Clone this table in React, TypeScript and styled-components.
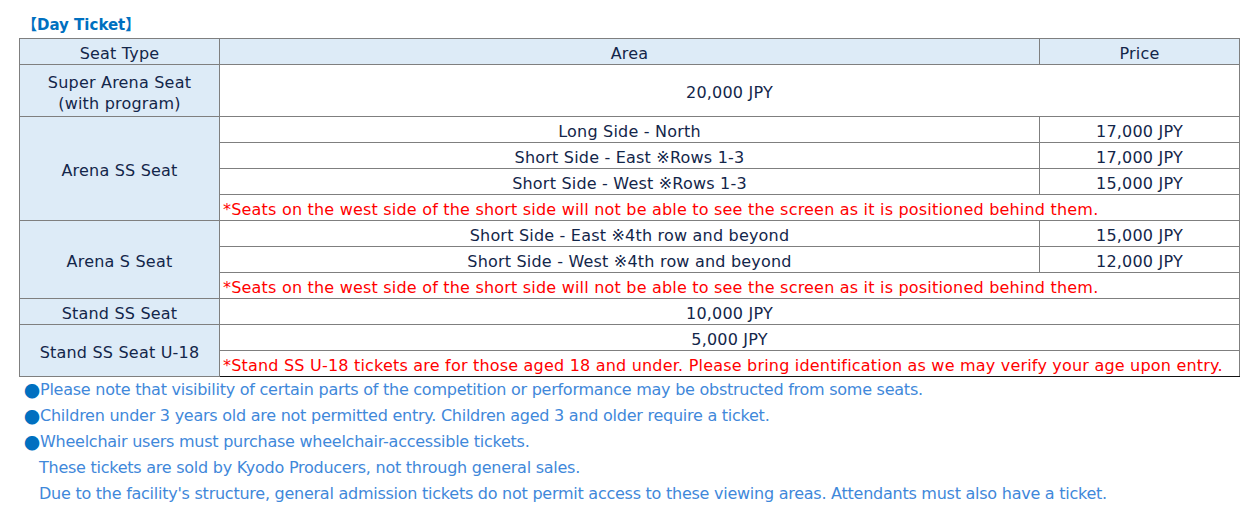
import { FC } from "react";
import styled, { createGlobalStyle } from "styled-components";

const GlobalStyle = createGlobalStyle`
    body {
        margin: 0;
        background: #FFFFFF;
        font-family: "DejaVu Sans", "Noto Sans CJK JP", sans-serif;
        font-size: 16px;
        color: #13264A;
    }
`

const Page = styled.div`
    padding: 12px 0 0 19px;
    width: 1220px;
`

const Title = styled.h2`
    margin: 0;
    padding-left: 3px;
    height: 26px;
    font-size: 15px;
    font-weight: bold;
    line-height: 26px;
    color: #0070C0;
`

const Table = styled.table`
    border-collapse: collapse;
    table-layout: fixed;
    width: 1220px;
    letter-spacing: 0.2px;
`

const Cell = styled.td<{ $head?: boolean; $note?: boolean }>`
    box-sizing: border-box;
    height: 26px;
    padding: 4px 2px 0;
    border: 1px solid #7F7F7F;
    line-height: 21px;
    text-align: ${p => (p.$note ? "left" : "center")};
    vertical-align: middle;
    white-space: nowrap;
    background: ${p => (p.$head ? "#DDEBF7" : "#FFFFFF")};
    color: ${p => (p.$note ? "#FF0000" : "#13264A")};
    padding-left: ${p => (p.$note ? "3px" : "2px")};
`

const SeatCell = styled(Cell)`
    background: #DDEBF7;
`

const LastRow = styled.tr`
    & > td:first-child {
        border-bottom-color: #111111;
    }
`

const Notes = styled.ul`
    list-style: none;
    margin: 0;
    padding: 0 0 0 5px;
    color: #3F88DA;
    letter-spacing: -0.25px;
`

const Note = styled.li<{ $indent?: boolean }>`
    height: 26px;
    line-height: 26px;
    white-space: nowrap;
    padding-left: ${p => (p.$indent ? "15px" : "0")};
`

const Bullet = styled.span`
    display: inline-block;
    height: 26px;
    vertical-align: top;
    color: #0070C0;
    font-family: "Noto Sans CJK JP", sans-serif;
    letter-spacing: 0;
`

interface PriceRow {
    area: string
    price: string
}

const arenaSS: PriceRow[] = [
    { area: "Long Side - North", price: "17,000 JPY" },
    { area: "Short Side - East ※Rows 1-3", price: "17,000 JPY" },
    { area: "Short Side - West ※Rows 1-3", price: "15,000 JPY" },
]

const arenaS: PriceRow[] = [
    { area: "Short Side - East ※4th row and beyond", price: "15,000 JPY" },
    { area: "Short Side - West ※4th row and beyond", price: "12,000 JPY" },
]

const westNote = "*Seats on the west side of the short side will not be able to see the screen as it is positioned behind them."

const SeatGroup: FC<{ name: string; rows: PriceRow[]; note: string }> = ({ name, rows, note }) => (
    <>
        {rows.map((r, i) => (
            <tr key={r.area}>
                {i === 0 && <SeatCell rowSpan={rows.length + 1}>{name}</SeatCell>}
                <Cell>{r.area}</Cell>
                <Cell>{r.price}</Cell>
            </tr>
        ))}
        <tr>
            <Cell $note colSpan={2}>{note}</Cell>
        </tr>
    </>
)

const App: FC = () => {
    return (
        <Page>
            <GlobalStyle />
            <Title>【Day Ticket】</Title>
            <Table>
                <colgroup>
                    <col style={{ width: 200 }} />
                    <col style={{ width: 820 }} />
                    <col style={{ width: 200 }} />
                </colgroup>
                <tbody>
                    <tr>
                        <Cell $head>Seat Type</Cell>
                        <Cell $head>Area</Cell>
                        <Cell $head>Price</Cell>
                    </tr>
                    <tr>
                        <SeatCell style={{ height: 52 }}>Super Arena Seat<br />(with program)</SeatCell>
                        <Cell colSpan={2}>20,000 JPY</Cell>
                    </tr>
                    <SeatGroup name="Arena SS Seat" rows={arenaSS} note={westNote} />
                    <SeatGroup name="Arena S Seat" rows={arenaS} note={westNote} />
                    <tr>
                        <SeatCell>Stand SS Seat</SeatCell>
                        <Cell colSpan={2}>10,000 JPY</Cell>
                    </tr>
                    <tr>
                        <SeatCell rowSpan={2}>Stand SS Seat U-18</SeatCell>
                        <Cell colSpan={2}>5,000 JPY</Cell>
                    </tr>
                    <LastRow>
                        <Cell $note colSpan={2}>*Stand SS U-18 tickets are for those aged 18 and under. Please bring identification as we may verify your age upon entry.</Cell>
                    </LastRow>
                </tbody>
            </Table>
            <Notes>
                <Note><Bullet>●</Bullet>Please note that visibility of certain parts of the competition or performance may be obstructed from some seats.</Note>
                <Note><Bullet>●</Bullet>Children under 3 years old are not permitted entry. Children aged 3 and older require a ticket.</Note>
                <Note><Bullet>●</Bullet>Wheelchair users must purchase wheelchair-accessible tickets.</Note>
                <Note $indent>These tickets are sold by Kyodo Producers, not through general sales.</Note>
                <Note $indent>Due to the facility's structure, general admission tickets do not permit access to these viewing areas. Attendants must also have a ticket.</Note>
            </Notes>
        </Page>
    );
}

export default App;
